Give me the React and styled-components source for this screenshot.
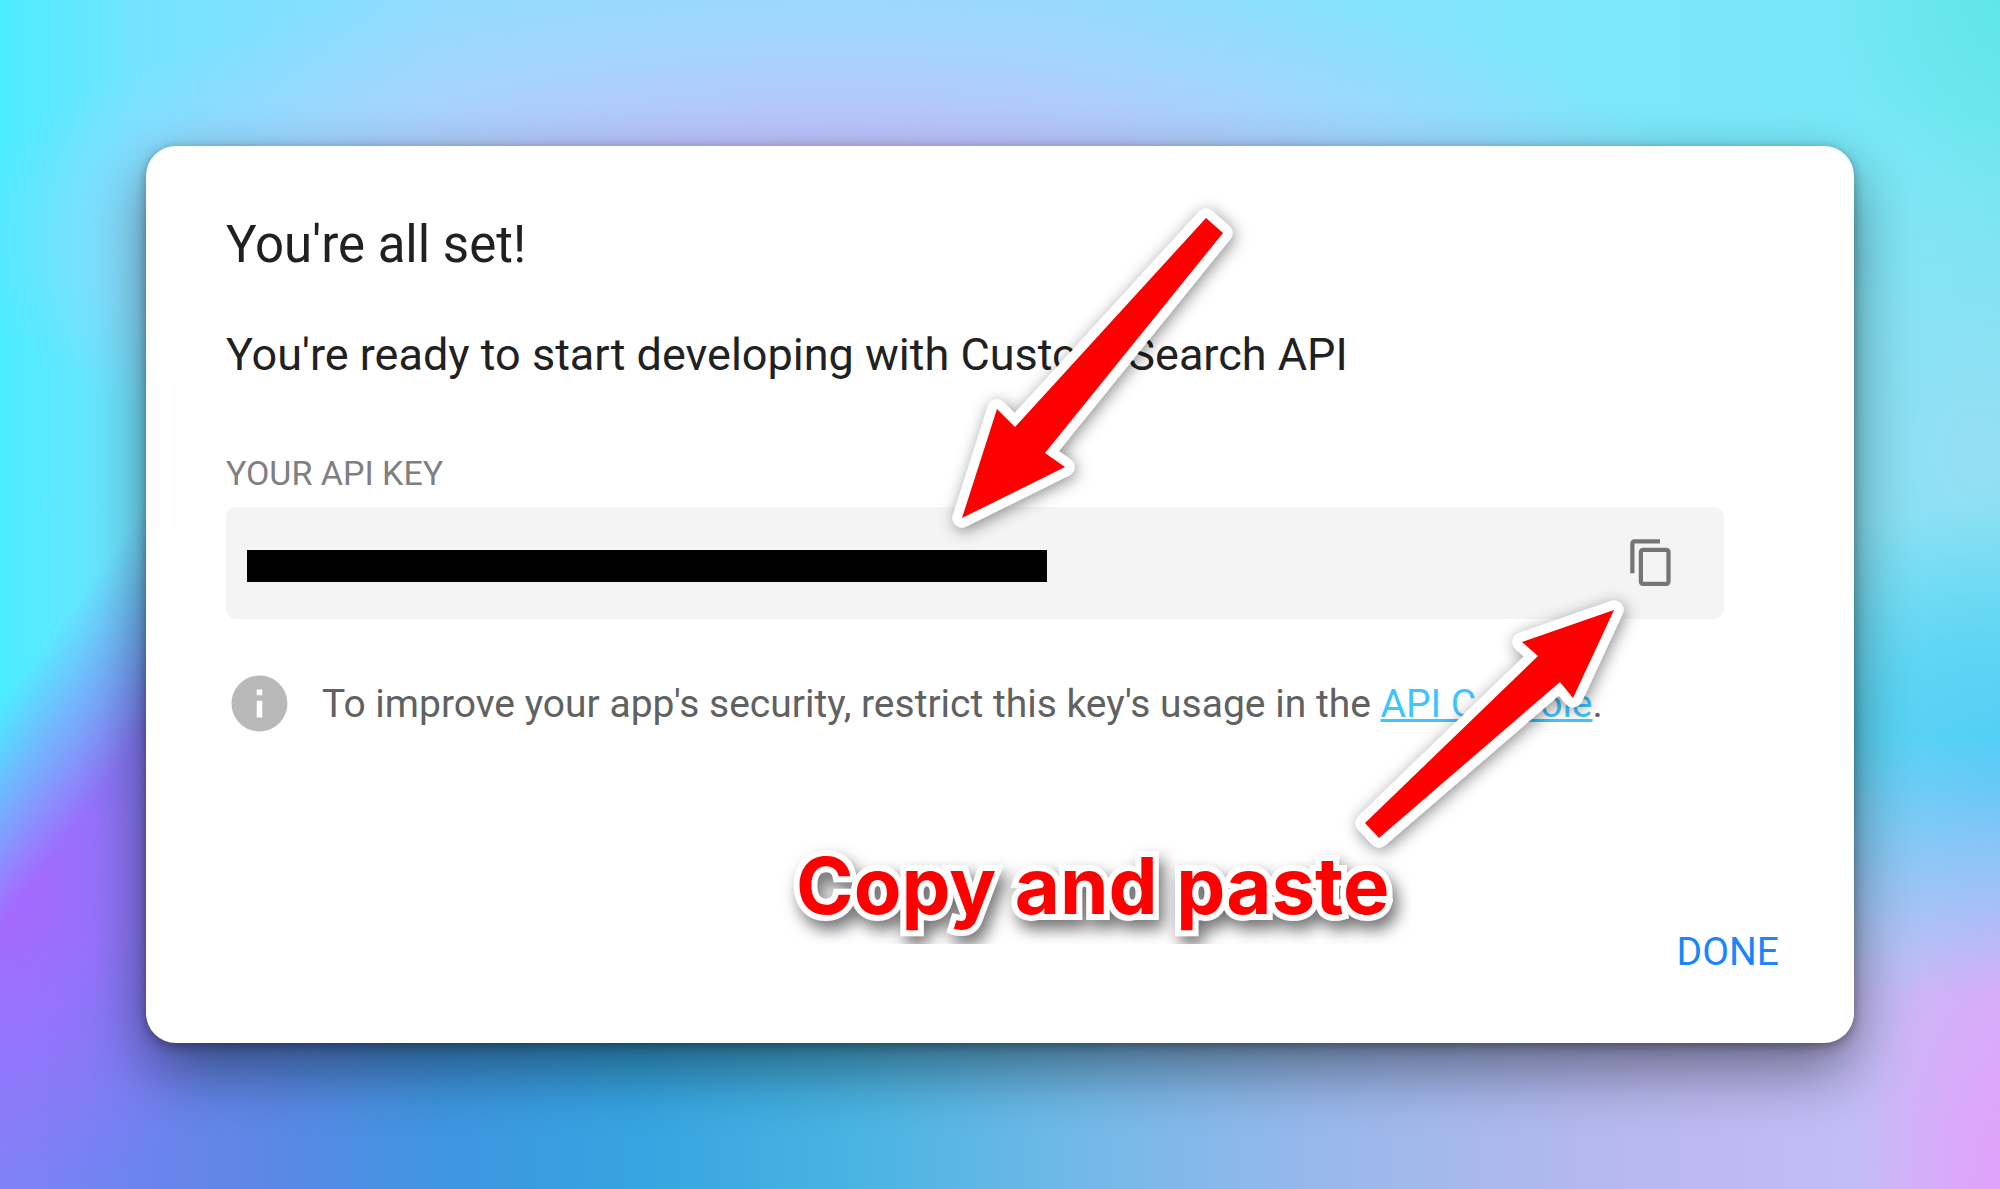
import React from "react";
import styled, { createGlobalStyle } from "styled-components";

const Global = createGlobalStyle`
  *, *::before, *::after { box-sizing: border-box; }
  body { margin: 0; font-family: Roboto, "Liberation Sans", sans-serif; }
`;

const Backdrop = styled.div`
  min-height: 100vh;
  display: grid;
  background:
    radial-gradient(ellipse 8% 26% at 101% 100%, #e39ffb 0%, #e39ffb00 100%),
    radial-gradient(ellipse 13% 28% at 0% 74%, #aa66ff 0%, #a66affaa 40%, #a070fc00 100%),
    linear-gradient(90deg, #7c84f6 0%, #6a84ec 8%, #5a88e4 14%, #3f95e0 22%, #35a5e0 32%, #4ab4e2 43%, #72b9e8 54%, #98b8ec 66%, #b5b8ee 80%, #c4bcf6 93%, #d2b4fa 100%);
`;

const Sky = styled.div`
  grid-area: 1 / 1;
  background:
    radial-gradient(ellipse 10% 16% at 101% 0%, #5ee5e8 0%, #5ee5e800 100%),
    radial-gradient(ellipse 44% 24% at 42% 20%, #c8b9f9 0%, #c3bdfbf0 30%, #b0d0ff99 70%, #a0d8ff00 100%),
    radial-gradient(ellipse 16% 24% at 100% 66%, #50ccf6 0%, #55d2f4cc 50%, #60d8f000 100%),
    radial-gradient(ellipse 14% 30% at 99% 38%, #96def4 0%, #96def400 100%),
    linear-gradient(90deg, #4cecff 0%, #74e4ff 7%, #90dcff 22%, #90dcff 52%, #7ce7fb 80%, #76e8f6 96%, #70e8f0 100%);
  mask-image:
    linear-gradient(180deg, #000 50%, transparent 100%),
    linear-gradient(126deg, #000 50%, transparent 66%),
    linear-gradient(180deg, #000 62%, transparent 84%);
  mask-size: 100% 30%, 8% 100%, 50% 100%;
  mask-position: left top, left top, right top;
  mask-repeat: no-repeat;
`;

const Dialog = styled.main`
  grid-area: 1 / 1;
  position: relative;
  display: flex;
  flex-direction: column;
  margin: 146px;
  padding: 65px 75px 64px 80px;
  border-radius: 30px;
  background: #fff;
  color: #212121;
  box-shadow: 0 26px 60px rgba(0, 0, 0, 0.46), 0 3px 12px rgba(0, 0, 0, 0.34);
`;

const Title = styled.h1`
  margin: 0;
  font-size: 51px;
  font-weight: 400;
  line-height: 68px;
`;

const Lead = styled.p`
  margin: 44px 0 0;
  font-size: 45px;
  line-height: 64px;
`;

const KeyLabel = styled.label`
  margin-top: 64px;
  font-size: 34px;
  line-height: 44px;
  color: #808080;
`;

const KeyBox = styled.div`
  display: flex;
  align-items: center;
  justify-content: space-between;
  height: 112px;
  margin: 12px 55px 0 0;
  padding: 5px 47px 0 21px;
  border-radius: 10px;
  background: #f4f4f4;
`;

const KeyField = styled.input`
  width: 800px;
  height: 32px;
  padding: 0;
  border: 0;
  background: #000;
  color: #000;
`;

const CopyButton = styled.button`
  display: flex;
  padding: 0 0 6px;
  border: 0;
  background: none;
  color: #757575;
`;

const Note = styled.div`
  display: flex;
  align-items: center;
  gap: 29px;
  margin-top: 51px;
  font-size: 39px;
  line-height: 64px;
  color: #616161;

  p { margin: 0; }
`;

const ConsoleLink = styled.a`
  color: #40c4ff;
  text-decoration: underline;
`;

const Actions = styled.div`
  display: flex;
  justify-content: flex-end;
  margin-top: auto;
`;

const DoneButton = styled.button`
  padding: 0;
  border: 0;
  background: none;
  font: 400 39px/54px Roboto, "Liberation Sans", sans-serif;
  color: #1a85ff;
`;

const Arrows = styled.svg`
  position: absolute;
  left: 0;
  top: 0;
  overflow: visible;
  pointer-events: none;
`;

const Callout = styled.div`
  position: absolute;
  left: 628px;
  top: 682px;
  padding: 0 22px;
  overflow: hidden;
  font: 700 78px/116px Inter, "Liberation Sans", sans-serif;
  color: #f00;
  white-space: nowrap;

  span {
    display: block;
    -webkit-text-stroke: 12px #fff;
    paint-order: stroke fill;
    filter: drop-shadow(5px 9px 8px rgba(0, 0, 0, 0.55));
  }
`;

function Arrow({ points }) {
  return (
    <polygon points={points} fill="#f00" stroke="#fff" strokeWidth="19" strokeLinejoin="round" paintOrder="stroke" />
  );
}

export default function App() {
  return (
    <>
      <Global />
      <Backdrop>
        <Sky />
        <Dialog>
          <Title>You're all set!</Title>
          <Lead>You're ready to start developing with Custom Search API</Lead>
          <KeyLabel htmlFor="key">YOUR API KEY</KeyLabel>
          <KeyBox>
            <KeyField id="key" readOnly />
            <CopyButton aria-label="Copy key">
              <svg width="51" height="51" viewBox="0 0 24 24" fill="currentColor">
                <path d="M16 1H4c-1.100 0-2 .9-2 2v14h2V3h12V1zm3 4H8c-1.100 0-2 .9-2 2v14c0 1.100.9 2 2 2h11c1.100 0 2-.9 2-2V7c0-1.100-.9-2-2-2zm0 16H8V7h11v14z" />
              </svg>
            </CopyButton>
          </KeyBox>
          <Note>
            <svg width="67" height="67" viewBox="0 0 24 24" fill="#b9b9b9">
              <path d="M12 2C6.480 2 2 6.480 2 12s4.480 10 10 10 10-4.480 10-10S17.520 2 12 2zm1 15h-2v-6h2v6zm0-8h-2V7h2v2z" />
            </svg>
            <p>
              To improve your app's security, restrict this key's usage in the <ConsoleLink href="#">API Console</ConsoleLink>.
            </p>
          </Note>
          <Actions>
            <DoneButton>DONE</DoneButton>
          </Actions>
          <Arrows width="1708" height="897" viewBox="146 146 1708 897" aria-hidden="true">
            <defs>
              <filter id="lift" x="-20%" y="-20%" width="140%" height="140%">
                <feDropShadow dx="2" dy="3" stdDeviation="8" floodOpacity="0.45" />
              </filter>
            </defs>
            <g filter="url(#lift)">
              <Arrow points="1206,218 1223,233 1045,453 1065,467 962,518 997,409 1015,427" />
            </g>
            <g filter="url(#lift)">
              <Arrow points="1365,823 1379,838 1560,682 1573,698 1614,610 1522,642 1538,656" />
            </g>
          </Arrows>
          <Callout>
            <span>Copy and paste</span>
          </Callout>
        </Dialog>
      </Backdrop>
    </>
  );
}
